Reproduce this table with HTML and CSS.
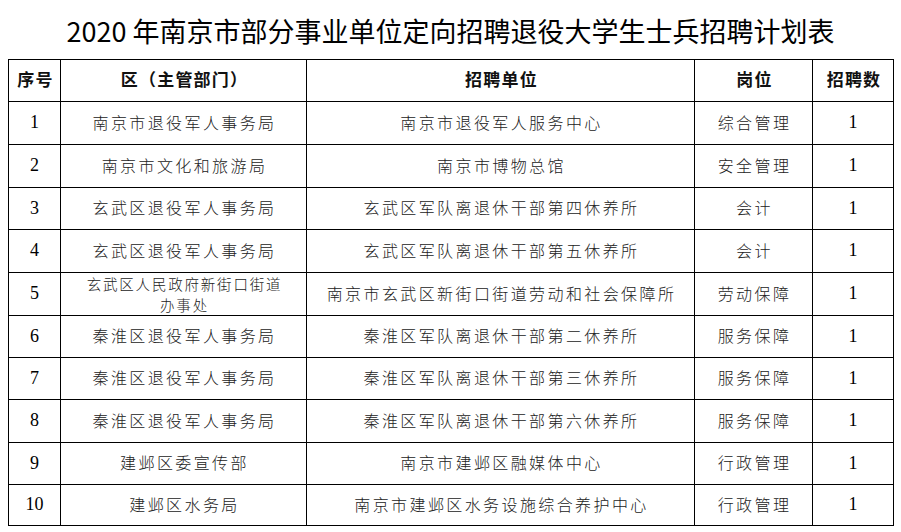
FILE: index.html
```html
<!DOCTYPE html>
<html lang="zh-CN">
<head>
<meta charset="utf-8">
<title>2020年南京市部分事业单位定向招聘退役大学生士兵招聘计划表</title>
<link rel="stylesheet" href="styles.css">
</head>
<body>
<h1 class="title">2020 年南京市部分事业单位定向招聘退役大学生士兵招聘计划表</h1>
<table class="plan">
  <colgroup>
    <col class="c-no"><col class="c-dept"><col class="c-unit"><col class="c-post"><col class="c-num">
  </colgroup>
  <thead>
    <tr class="h"><th>序号</th><th>区（主管部门）</th><th>招聘单位</th><th>岗位</th><th>招聘数</th></tr>
  </thead>
  <tbody>
    <tr class="r43"><td class="num">1</td><td>南京市退役军人事务局</td><td>南京市退役军人服务中心</td><td>综合管理</td><td class="num">1</td></tr>
    <tr class="r43"><td class="num">2</td><td>南京市文化和旅游局</td><td>南京市博物总馆</td><td>安全管理</td><td class="num">1</td></tr>
    <tr class="r42"><td class="num">3</td><td>玄武区退役军人事务局</td><td>玄武区军队离退休干部第四休养所</td><td>会计</td><td class="num">1</td></tr>
    <tr class="r43"><td class="num">4</td><td>玄武区退役军人事务局</td><td>玄武区军队离退休干部第五休养所</td><td>会计</td><td class="num">1</td></tr>
    <tr class="r43"><td class="num">5</td><td class="two"><span class="ln">玄武区人民政府新街口街道</span><span class="ln">办事处</span></td><td>南京市玄武区新街口街道劳动和社会保障所</td><td>劳动保障</td><td class="num">1</td></tr>
    <tr class="r42"><td class="num">6</td><td>秦淮区退役军人事务局</td><td>秦淮区军队离退休干部第二休养所</td><td>服务保障</td><td class="num">1</td></tr>
    <tr class="r42"><td class="num">7</td><td>秦淮区退役军人事务局</td><td>秦淮区军队离退休干部第三休养所</td><td>服务保障</td><td class="num">1</td></tr>
    <tr class="r43"><td class="num">8</td><td>秦淮区退役军人事务局</td><td>秦淮区军队离退休干部第六休养所</td><td>服务保障</td><td class="num">1</td></tr>
    <tr class="r42"><td class="num">9</td><td>建邺区委宣传部</td><td>南京市建邺区融媒体中心</td><td>行政管理</td><td class="num">1</td></tr>
    <tr class="r41"><td class="num">10</td><td>建邺区水务局</td><td>南京市建邺区水务设施综合养护中心</td><td>行政管理</td><td class="num">1</td></tr>
  </tbody>
</table>
</body>
</html>
```
FILE: styles.css
```css
html, body {
  margin: 0;
  padding: 0;
  background: #ffffff;
}
body {
  padding: 8px;
  font-family: "Noto Sans CJK SC", "Noto Sans", sans-serif;
  color: #000;
}
.title {
  margin: 0 0 5px 0;
  height: 46px;
  line-height: 46px;
  font-size: 27px;
  font-weight: 400;
  text-align: center;
  color: #000;
  letter-spacing: 0;
}
.plan {
  border-collapse: collapse;
  table-layout: fixed;
  width: 885px;
}
.c-no { width: 52px; }
.c-dept { width: 246px; }
.c-unit { width: 388px; }
.c-post { width: 118px; }
.c-num { width: 81px; }
.plan th, .plan td {
  border: 1px solid #000;
  padding: 0 0 3px 2px;
  text-align: center;
  vertical-align: middle;
  font-size: 16px;
  line-height: 24px;
  letter-spacing: 2.4px;
  white-space: nowrap;
  overflow: hidden;
}
.plan th {
  font-weight: 700;
  font-size: 17px;
  letter-spacing: 1.2px;
  color: #111;
}
.plan td {
  font-weight: 300;
  color: #222;
}
.h { height: 42px; }
.r43 { height: 43px; }
.r42 { height: 42px; }
.r41 { height: 41px; }
.plan td.num {
  font-family: "Liberation Serif", serif;
  font-size: 18px;
  letter-spacing: 0;
  padding: 0 0 2px 0;
  color: #000;
}
.plan td.two {
  font-size: 14.5px;
  letter-spacing: 1.8px;
  white-space: normal;
  padding: 0 0 0 2px;
}
.plan td.two .ln {
  display: block;
  line-height: 21px;
  height: 21px;
}
```
